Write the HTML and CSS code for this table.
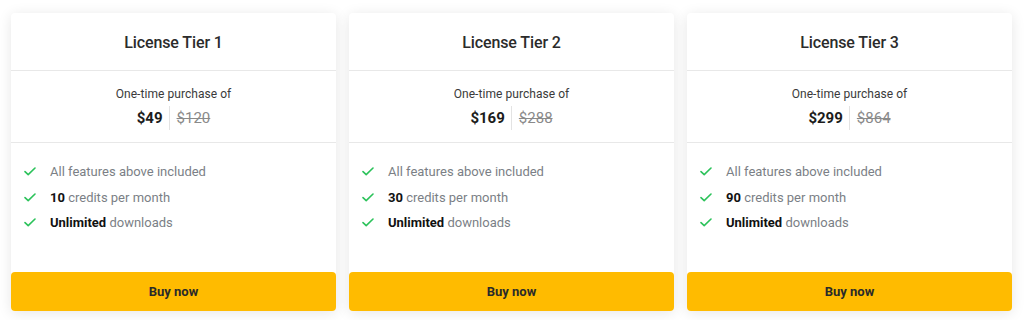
FILE: index.html
```html
<!DOCTYPE html>
<html>
<head>
<meta charset="utf-8">
<link rel="stylesheet" href="styles.css">
</head>
<body>
<div class="tiers">
  <div class="card">
    <div class="head">License Tier 1</div>
    <div class="price">
      <div class="label">One-time purchase of</div>
      <div class="amounts"><span class="now">$49</span><span class="was">$120</span></div>
    </div>
    <ul class="features">
      <li><svg class="check" viewBox="0 0 12 9"><path d="M1 4.6 L4.2 7.6 L11 1" /></svg><span>All features above included</span></li>
      <li><svg class="check" viewBox="0 0 12 9"><path d="M1 4.6 L4.2 7.6 L11 1" /></svg><span><b>10</b> credits per month</span></li>
      <li><svg class="check" viewBox="0 0 12 9"><path d="M1 4.6 L4.2 7.6 L11 1" /></svg><span><b>Unlimited</b> downloads</span></li>
    </ul>
    <button class="buy">Buy now</button>
  </div>
  <div class="card">
    <div class="head">License Tier 2</div>
    <div class="price">
      <div class="label">One-time purchase of</div>
      <div class="amounts"><span class="now">$169</span><span class="was">$288</span></div>
    </div>
    <ul class="features">
      <li><svg class="check" viewBox="0 0 12 9"><path d="M1 4.6 L4.2 7.6 L11 1" /></svg><span>All features above included</span></li>
      <li><svg class="check" viewBox="0 0 12 9"><path d="M1 4.6 L4.2 7.6 L11 1" /></svg><span><b>30</b> credits per month</span></li>
      <li><svg class="check" viewBox="0 0 12 9"><path d="M1 4.6 L4.2 7.6 L11 1" /></svg><span><b>Unlimited</b> downloads</span></li>
    </ul>
    <button class="buy">Buy now</button>
  </div>
  <div class="card">
    <div class="head">License Tier 3</div>
    <div class="price">
      <div class="label">One-time purchase of</div>
      <div class="amounts"><span class="now">$299</span><span class="was">$864</span></div>
    </div>
    <ul class="features">
      <li><svg class="check" viewBox="0 0 12 9"><path d="M1 4.6 L4.2 7.6 L11 1" /></svg><span>All features above included</span></li>
      <li><svg class="check" viewBox="0 0 12 9"><path d="M1 4.6 L4.2 7.6 L11 1" /></svg><span><b>90</b> credits per month</span></li>
      <li><svg class="check" viewBox="0 0 12 9"><path d="M1 4.6 L4.2 7.6 L11 1" /></svg><span><b>Unlimited</b> downloads</span></li>
    </ul>
    <button class="buy">Buy now</button>
  </div>
</div>
</body>
</html>
```
FILE: styles.css
```css
* { box-sizing: border-box; }
html, body { margin: 0; background: #ffffff; }
body {
  font-family: Roboto, "Liberation Sans", sans-serif;
  color: #1f2328;
  width: 1024px;
  height: 320px;
  overflow: hidden;
}
.tiers {
  display: flex;
  gap: 13px;
  padding: 13px 12px 0 11px;
}
.card {
  flex: 1;
  background: #fff;
  border-radius: 4px;
  box-shadow: 0 2px 14px rgba(0, 0, 0, 0.10);
  display: flex;
  flex-direction: column;
  height: 298px;
}
.head {
  height: 58px;
  display: flex;
  align-items: center;
  justify-content: center;
  font-size: 16px;
  font-weight: 500;
  color: #2b2b2b;
  letter-spacing: -0.1px;
  border-bottom: 1px solid #e8e8e8;
  padding-top: 1px;
}
.price {
  height: 72px;
  border-bottom: 1px solid #e8e8e8;
  display: flex;
  flex-direction: column;
  align-items: center;
  padding-top: 15px;
}
.label {
  font-size: 12px;
  color: #3a3a3a;
  line-height: 16px;
  letter-spacing: 0.05px;
}
.amounts {
  display: flex;
  align-items: center;
  margin-top: 4px;
  height: 24px;
}
.now {
  font-size: 15px;
  font-weight: 700;
  color: #1c1c1c;
  padding-right: 6px;
  border-right: 1px solid #e3e3e3;
  line-height: 24px;
}
.was {
  font-size: 15px;
  color: #8a8a8a;
  text-decoration: line-through;
  padding-left: 7px;
  line-height: 24px;
}
.features {
  list-style: none;
  margin: 0;
  padding: 16px 0 0 13px;
  flex: 1;
}
.features li {
  display: flex;
  align-items: center;
  height: 25.5px;
  font-size: 13px;
  color: #7b7f86;
}
.features b { color: #111; font-weight: 700; }
.check {
  width: 12px;
  height: 9px;
  margin-right: 14px;
  fill: none;
  stroke: #2bc25a;
  stroke-width: 1.6;
  stroke-linecap: round;
  stroke-linejoin: round;
}
.buy {
  height: 39px;
  border: none;
  border-radius: 4px;
  background: #ffbb00;
  font-family: Roboto, "Liberation Sans", sans-serif;
  font-size: 13px;
  font-weight: 700;
  color: #2a2a2a;
  width: 100%;
  margin: 0;
  padding: 0;
}
```
